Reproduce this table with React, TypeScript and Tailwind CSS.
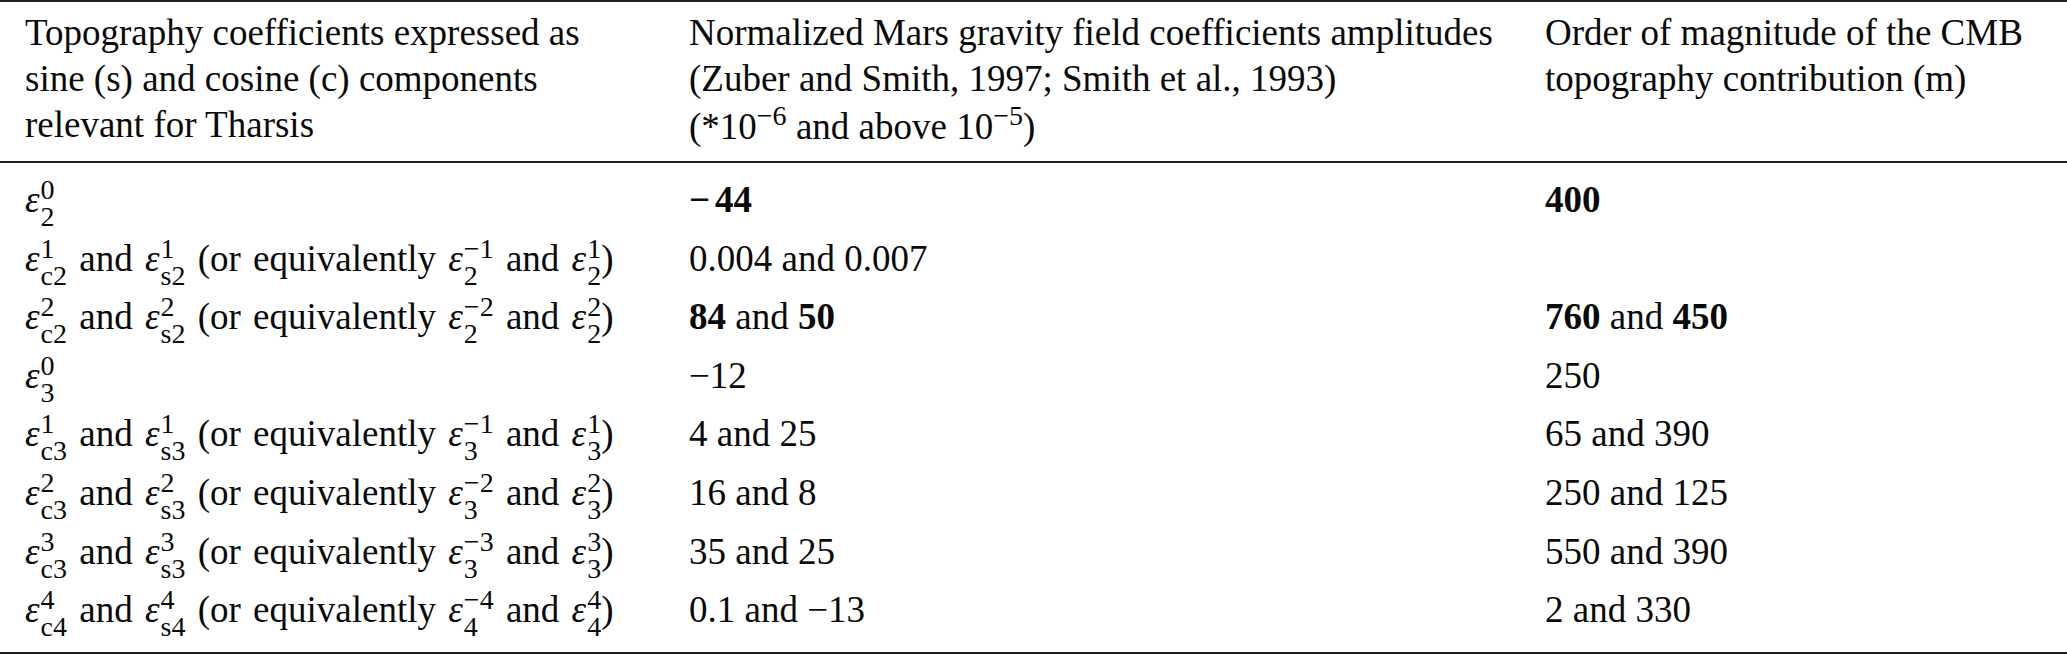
import React from "react";

type Cell = React.ReactNode;

const Stack = ({ sup, sub }: { sup: string; sub: string }) => (
  <span className="inline-block align-[-14px] text-[28px] leading-[27px] not-italic ml-[1px] [word-spacing:0px]">
    <span className="block">{sup}</span>
    <span className="block">{sub}</span>
  </span>
);

const Eps = ({ sup, sub }: { sup: string; sub: string }) => (
  <span>
    <span className="italic">ε</span>
    <Stack sup={sup} sub={sub} />
  </span>
);

const Pair = ({ l, m }: { l: string; m: string }) => (
  <span>
    <Eps sup={m} sub={`c${l}`} /> and <Eps sup={m} sub={`s${l}`} /> (or equivalently{" "}
    <Eps sup={`−${m}`} sub={l} /> and <Eps sup={m} sub={l} />)
  </span>
);

const rows: [Cell, Cell, Cell][] = [
  [
    <Eps sup="0" sub="2" />,
    <b>
      −<span className="ml-[5px]">44</span>
    </b>,
    <b>400</b>,
  ],
  [<Pair l="2" m="1" />, <span>0.004 and 0.007</span>, null],
  [
    <Pair l="2" m="2" />,
    <span>
      <b>84</b> and <b>50</b>
    </span>,
    <span>
      <b>760</b> and <b>450</b>
    </span>,
  ],
  [<Eps sup="0" sub="3" />, <span>−12</span>, <span>250</span>],
  [<Pair l="3" m="1" />, <span>4 and 25</span>, <span>65 and 390</span>],
  [<Pair l="3" m="2" />, <span>16 and 8</span>, <span>250 and 125</span>],
  [<Pair l="3" m="3" />, <span>35 and 25</span>, <span>550 and 390</span>],
  [<Pair l="4" m="4" />, <span>0.1 and −13</span>, <span>2 and 330</span>],
];

export default function App() {
  return (
    <div className="w-[2067px] h-[654px] bg-white text-[#0a0a0a] font-['Liberation_Serif','Times_New_Roman',serif] overflow-hidden">
      <div className="h-[2px] bg-[#1e1e1e]" />
      <div className="grid grid-cols-[689px_856px_1fr] h-[159px] pt-[8px] text-[37px] leading-[46px] whitespace-nowrap">
        <div className="pl-[25px]">
          <div>Topography coefficients expressed as</div>
          <div>sine (s) and cosine (c) components</div>
          <div>relevant for Tharsis</div>
        </div>
        <div>
          <div>Normalized Mars gravity field coefficients amplitudes</div>
          <div>(Zuber and Smith, 1997; Smith et al., 1993)</div>
          <div>
            (*10
            <span className="text-[28px] leading-none align-[14px]">−6</span> and above 10
            <span className="text-[28px] leading-none align-[14px]">−5</span>)
          </div>
        </div>
        <div>
          <div>Order of magnitude of the CMB</div>
          <div>topography contribution (m)</div>
        </div>
      </div>
      <div className="h-[2px] bg-[#1e1e1e]" />
      <div className="h-[489px] pt-[8px] text-[37px]">
        {rows.map((r, i) => (
          <div
            key={i}
            className="grid grid-cols-[689px_856px_1fr] h-[58.6px] leading-[58.6px] whitespace-nowrap"
          >
            <div className="pl-[25px] [word-spacing:3px]">{r[0]}</div>
            <div>{r[1]}</div>
            <div>{r[2]}</div>
          </div>
        ))}
      </div>
      <div className="h-[2px] bg-[#1e1e1e]" />
    </div>
  );
}
